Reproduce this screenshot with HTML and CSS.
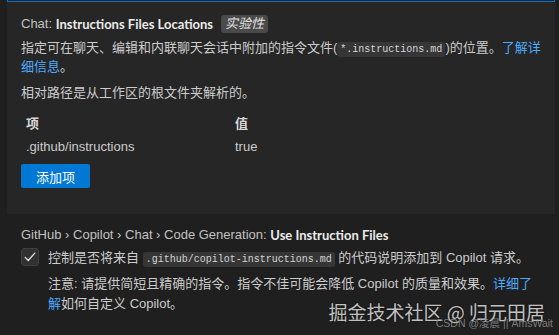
FILE: index.html
```html
<!DOCTYPE html>
<html lang="zh-CN">
<head>
<meta charset="utf-8">
<link rel="stylesheet" href="styles.css">
</head>
<body>
<div class="prev-outline"></div>
<section class="setting setting-hover">
  <div class="title"><span class="category">Chat:&nbsp;</span><span class="label">Instructions Files Locations</span><span class="badge">实验性</span></div>
  <p class="desc">指定可在聊天、编辑和内联聊天会话中附加的指令文件(<code>*.instructions.md</code>)的位置。<a class="link">了解详细信息</a>。</p>
  <p class="desc desc-gap">相对路径是从工作区的根文件夹解析的。</p>
  <div class="table">
    <div class="row head"><span class="col-key">项</span><span class="col-val">值</span></div>
    <div class="row"><span class="col-key">.github/instructions</span><span class="col-val">true</span></div>
  </div>
  <button class="btn">添加项</button>
</section>
<section class="setting">
  <div class="title"><span class="category">GitHub › Copilot › Chat › Code Generation:&nbsp;</span><span class="label">Use Instruction Files</span></div>
  <div class="check-row">
    <span class="checkbox"><svg width="14" height="14" viewBox="0 0 16 16"><path d="M2.5 8.5 L6 12 L13.5 3.5" fill="none" stroke="#e6e6e6" stroke-width="1.4" stroke-linecap="round" stroke-linejoin="round"/></svg></span>
    <div class="check-text">
      <p class="desc">控制是否将来自 <code>.github/copilot-instructions.md</code> 的代码说明添加到 Copilot 请求。</p>
      <p class="desc note">注意: 请提供简短且精确的指令。指令不佳可能会降低 Copilot 的质量和效果。<a class="link">详细了解</a>如何自定义 Copilot。</p>
    </div>
  </div>
</section>
<div class="watermark">
  <div class="wm-main">掘金技术社区 @ 归元田居</div>
  <div class="wm-sub">CSDN @凌晨 || AmsWait</div>
</div>
</body>
</html>
```
FILE: styles.css
```css
* { box-sizing: border-box; }
html, body {
  margin: 0;
  padding: 0;
  background: #1f1f1f;
  width: 559px;
  height: 335px;
  overflow: hidden;
}
body {
  font-family: "Liberation Sans", "Noto Sans CJK SC", sans-serif;
  font-size: 13px;
  color: #cccccc;
  position: relative;
}
.prev-outline {
  height: 2px;
  margin: 0 4px 0 7px;
  border: 1px solid #0078d4;
  border-top: none;
}
.setting {
  margin: 0 4px 0 7px;
  padding: 12px 12px 12px 14px;
}
.setting-hover {
  background: #262626;
  padding-top: 13px;
  padding-bottom: 26px;
}
.title {
  height: 18px;
  line-height: 18px;
  display: flex;
  align-items: center;
  white-space: nowrap;
}
.category {
  font-weight: 400;
  color: #c2c2c2;
}
.label {
  font-family: "Lato", "Noto Sans CJK SC", sans-serif;
  font-weight: 700;
  color: #ebebeb;
}
.badge {
  margin-left: 8px;
  background: #4a4a4a;
  color: #e2e2e2;
  font-style: italic;
  border-radius: 3px;
  padding: 0 4px;
  line-height: 18px;
  height: 18px;
}
.desc {
  margin: 5px 0 0;
  line-height: 19px;
}
.desc-gap { margin-top: 7px; }
code {
  font-family: "Liberation Mono", monospace;
  font-size: 10px;
  line-height: 10px;
  background: #363636;
  color: #d4d4d4;
  border-radius: 3px;
  padding: 2px 3px;
}
.link { color: #4daafc; text-decoration: none; }
.table {
  margin-top: 10px;
}
.row {
  display: flex;
  height: 23px;
  line-height: 23px;
}
.row.head { font-weight: 700; color: #d8d8d8; }
.col-key { width: 209px; padding-left: 5px; }
.col-val { padding-left: 5px; }
.btn {
  margin-top: 6px;
  display: block;
  width: 69px;
  height: 24px;
  background: #0078d4;
  color: #ffffff;
  border: none;
  border-radius: 2px;
  font-family: "Noto Sans CJK SC", sans-serif;
  font-size: 13px;
  padding: 0;
}
.check-row {
  display: flex;
  margin-top: 4px;
  gap: 9px;
}
.checkbox {
  flex: none;
  width: 18px;
  height: 18px;
  background: #313131;
  border: 1px solid #3f3f3f;
  border-radius: 3px;
  display: flex;
  align-items: center;
  justify-content: center;
}
.check-text { flex: 1; max-width: 490px; padding-top: 1px; }
.check-text .desc:first-child { margin-top: 0; line-height: 18px; }
.note { margin-top: 7px; line-height: 20px; }
.watermark {
  position: absolute;
  right: 6px;
  top: 299px;
  text-align: right;
}
.wm-main {
  font-family: "Noto Sans CJK SC", sans-serif;
  font-size: 19px;
  line-height: 26px;
  color: rgba(225, 225, 225, 0.85);
  text-shadow: 0 0 2px rgba(0,0,0,0.6);
  margin-right: 8px;
}
.wm-sub {
  font-family: "Liberation Sans", "Noto Sans CJK SC", sans-serif;
  font-size: 10.5px;
  line-height: 11px;
  margin-top: -7px;
  color: rgba(150, 150, 150, 0.8);
}
```
